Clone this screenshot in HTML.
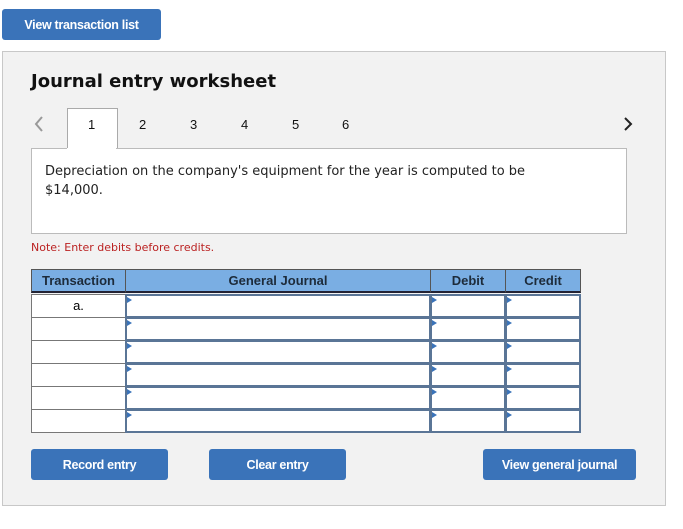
<!DOCTYPE html>
<html><head><style>
body{margin:0;width:683px;height:529px;background:#fff;font-family:"Liberation Sans",Arial,sans-serif;position:relative;overflow:hidden}
.a{position:absolute}
.btn{position:absolute;background:#3a73b9;color:#fff;font-weight:bold;font-size:12.5px;border-radius:3px;display:flex;align-items:center;justify-content:center;letter-spacing:-0.3px}
.panel{left:2px;top:51px;width:662px;height:453px;background:#f2f2f2;border:1px solid #c8c8c8}
.tab{position:absolute;top:117px;font-size:13px;color:#111}
.hd{position:absolute;top:269px;height:24px;background:#7aaee3;border:1px solid #555;border-bottom:2px solid #223;font-weight:bold;font-size:13px;color:#1d2b3a;display:flex;align-items:center;justify-content:center;box-sizing:border-box}
.tc{position:absolute;background:#fff;border:1px solid #777;box-sizing:border-box;font-size:13px;text-align:center}
.in{position:absolute;background:#fff;border:2px solid #5a7596;box-sizing:border-box}
.in:before{content:"";position:absolute;left:0;top:1px;border-left:5px solid #3a73b9;border-top:3px solid transparent;border-bottom:3px solid transparent}
</style></head><body>
<div class="btn" style="left:2px;top:9px;width:159px;height:31px">View transaction list</div>
<div class="a panel"></div>
<div class="a" style="left:31px;top:71px;font-family:'DejaVu Sans',sans-serif;font-weight:bold;font-size:18px;color:#111">Journal entry worksheet</div>
<svg class="a" style="left:33px;top:116px" width="12" height="16"><path d="M9 1 L3 8 L9 15" fill="none" stroke="#999" stroke-width="2"/></svg>
<svg class="a" style="left:622px;top:116px" width="12" height="16"><path d="M3 2 L9 8 L3 14" fill="none" stroke="#222" stroke-width="2"/></svg>
<div class="a" style="left:67px;top:108px;width:49px;height:42px;background:#fff;border:1px solid #aaa;border-bottom:none"></div>
<div class="tab" style="left:88px">1</div><div class="tab" style="left:139px">2</div><div class="tab" style="left:190px">3</div><div class="tab" style="left:241px">4</div><div class="tab" style="left:292px">5</div><div class="tab" style="left:342px">6</div>
<div class="a" style="left:31px;top:148px;width:594px;height:84px;background:#fff;border:1px solid #bbb"></div>
<div class="a" style="left:67px;top:148px;width:49px;height:2px;background:#fff"></div>
<div class="a" style="left:45px;top:162px;font-family:'DejaVu Sans',sans-serif;font-size:13px;line-height:19px;color:#222;width:540px">Depreciation on the company's equipment for the year is computed to be<br>$14,000.</div>
<div class="a" style="left:31px;top:241px;font-family:'DejaVu Sans',sans-serif;font-size:11px;color:#b22">Note: Enter debits before credits.</div>
<div class="hd" style="left:31px;width:95px">Transaction</div>
<div class="hd" style="left:125px;width:306px">General Journal</div>
<div class="hd" style="left:430px;width:76px">Debit</div>
<div class="hd" style="left:505px;width:76px">Credit</div>
<div class="tc" style="left:31px;top:294px;width:95px;height:24px;line-height:22px">a.</div>
<div class="tc" style="left:31px;top:317px;width:95px;height:24px"></div>
<div class="tc" style="left:31px;top:340px;width:95px;height:24px"></div>
<div class="tc" style="left:31px;top:363px;width:95px;height:24px"></div>
<div class="tc" style="left:31px;top:386px;width:95px;height:24px"></div>
<div class="tc" style="left:31px;top:409px;width:95px;height:24px"></div>
<div class="in" style="left:125px;top:294px;width:306px;height:24px"></div><div class="in" style="left:430px;top:294px;width:76px;height:24px"></div><div class="in" style="left:505px;top:294px;width:76px;height:24px"></div>
<div class="in" style="left:125px;top:317px;width:306px;height:24px"></div><div class="in" style="left:430px;top:317px;width:76px;height:24px"></div><div class="in" style="left:505px;top:317px;width:76px;height:24px"></div>
<div class="in" style="left:125px;top:340px;width:306px;height:24px"></div><div class="in" style="left:430px;top:340px;width:76px;height:24px"></div><div class="in" style="left:505px;top:340px;width:76px;height:24px"></div>
<div class="in" style="left:125px;top:363px;width:306px;height:24px"></div><div class="in" style="left:430px;top:363px;width:76px;height:24px"></div><div class="in" style="left:505px;top:363px;width:76px;height:24px"></div>
<div class="in" style="left:125px;top:386px;width:306px;height:24px"></div><div class="in" style="left:430px;top:386px;width:76px;height:24px"></div><div class="in" style="left:505px;top:386px;width:76px;height:24px"></div>
<div class="in" style="left:125px;top:409px;width:306px;height:24px"></div><div class="in" style="left:430px;top:409px;width:76px;height:24px"></div><div class="in" style="left:505px;top:409px;width:76px;height:24px"></div>
<div class="btn" style="left:31px;top:449px;width:137px;height:31px">Record entry</div>
<div class="btn" style="left:209px;top:449px;width:137px;height:31px">Clear entry</div>
<div class="btn" style="left:483px;top:449px;width:153px;height:31px">View general journal</div>
</body></html>
